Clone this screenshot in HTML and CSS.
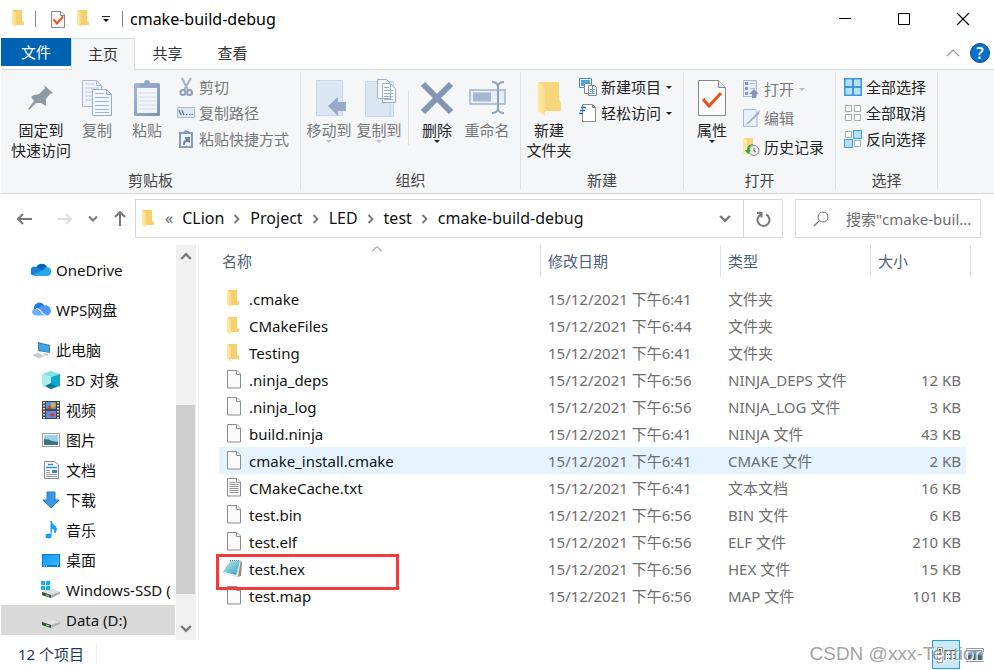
FILE: index.html
```html
<!DOCTYPE html>
<html lang="zh-CN">
<head>
<meta charset="utf-8">
<title>cmake-build-debug</title>
<link rel="stylesheet" href="styles.css">
</head>
<body>
<svg class="sprite" aria-hidden="true">
  <defs>
    <linearGradient id="gold" x1="0" x2="1"><stop offset="0" stop-color="#ffe9a6"/><stop offset="1" stop-color="#fbdc8a"/></linearGradient>
    <linearGradient id="steel" x1="0" x2="1" y2="1"><stop offset="0" stop-color="#a6b7d4"/><stop offset="1" stop-color="#7d91b8"/></linearGradient>
    <linearGradient id="teal" x1="0" x2="1" y2="1"><stop offset="0" stop-color="#c4ebf2"/><stop offset="1" stop-color="#2f9fbd"/></linearGradient>
    <linearGradient id="screen" x1="0" x2="1" y2="1"><stop offset="0" stop-color="#0a9aff"/><stop offset="1" stop-color="#3fb4ff"/></linearGradient>
  </defs>
  <symbol id="folder" viewBox="0 0 14 18"><path d="M2 0h9v11l2 1v3H3z" fill="#f6d06c"/><path d="M1 0l4 3v14L1 15z" fill="url(#gold)"/></symbol>
  <symbol id="page" viewBox="0 0 16 19"><path d="M1.500.500h9.500l3.500 3.500v14h-13z" fill="#fafafa" stroke="#8c8c8c"/><path d="M10.500.500v4h4" fill="#fff" stroke="#8c8c8c"/></symbol>
  <symbol id="textpage" viewBox="0 0 16 19"><path d="M1.500.500h9.500l3.500 3.500v14h-13z" fill="#fafafa" stroke="#8c8c8c"/><path d="M10.500.500v4h4" fill="#fff" stroke="#8c8c8c"/><path d="M3.500 4.500h6m-6 2h9m-9 2h9m-9 2h9m-9 2h9m-9 2h9" stroke="#999"/></symbol>
  <symbol id="drive" viewBox="0 0 20 18"><path d="M1 11l10-3 8 3v2l-9 4-9-3z" fill="#aeb0b3"/><path d="M1 11l10-3 8 3-9 3z" fill="#dfe1e4"/><path d="M1 11l9 3v3l-9-3z" fill="#444"/><path d="M5 14l3 1" stroke="#5edb5e" stroke-width="1.500"/></symbol>
  <symbol id="chev" viewBox="0 0 10 10"><path d="M1 2.500l4 4 4-4" fill="none" stroke="currentColor" stroke-width="2"/></symbol>
  <symbol id="crumb" viewBox="0 0 7 10"><path d="M1.500 1l4 4-4 4" fill="none" stroke="#777" stroke-width="1.800"/></symbol>
  <symbol id="tri" viewBox="0 0 6 3"><path d="M0 0h6L3 3z" fill="currentColor"/></symbol>
</svg>

<header class="titlebar">
  <svg class="tb-folder"><use href="#folder"/></svg>
  <span class="tb-line"></span>
  <button class="tb-btn tb-check" aria-label="属性"><svg width="16" height="19" viewBox="0 0 16 19"><path d="M1.500 1.500h9.500l3.500 3.500v12.500h-13z" fill="#f6f6f6" stroke="#888"/><path d="M10.500 1.500v4h4" fill="#fff" stroke="#888"/><path d="M3.500 9.500l3.500 4 6-7" fill="none" stroke="#e8541a" stroke-width="2"/></svg></button>
  <button class="tb-btn" aria-label="新建文件夹"><svg class="tb-folder"><use href="#folder"/></svg></button>
  <button class="tb-btn tb-more" aria-label="自定义"><svg width="8" height="8" viewBox="0 0 8 8"><path d="M0 1.500h8" stroke="#222"/><path d="M1 4h6L4 7z" fill="#000"/></svg></button>
  <span class="tb-line"></span>
  <h1 class="tb-title">cmake-build-debug</h1>
  <div class="win-controls">
    <button aria-label="最小化"><svg width="14" height="14"><path d="M1 6.500h12" stroke="#000"/></svg></button>
    <button aria-label="最大化"><svg width="14" height="14"><path d="M1.500 1.500h11v11h-11z" fill="none" stroke="#000"/></svg></button>
    <button aria-label="关闭"><svg width="14" height="14"><path d="M1 1l12 12M13 1L1 13" stroke="#000" stroke-width="1.200"/></svg></button>
  </div>
</header>

<nav class="tabs">
  <button class="tab file">文件</button>
  <button class="tab active">主页</button>
  <button class="tab">共享</button>
  <button class="tab">查看</button>
  <div class="tab-tools">
    <button aria-label="折叠功能区"><svg width="14" height="8"><path d="M1 7l6-6 6 6" fill="none" stroke="#999" stroke-width="1.200"/></svg></button>
    <button class="help" aria-label="帮助">?</button>
  </div>
</nav>

<section class="ribbon">
  <div class="group clip">
    <div class="tools">
      <button class="big pin"><span class="pic"><svg width="26" height="28" viewBox="0 0 26 28"><path d="M16 1l9 8-3 1-4 5 0 7-5-3-5 0-7 7-1-1 6-8-3-4 3-2 5-1 6-6z" fill="#8f9ba3"/></svg></span>固定到<br>快速访问</button>
      <button class="big dim"><span class="pic"><svg width="32" height="38" viewBox="0 0 32 38"><path d="M1.500 1.500h14l5 5v21h-19z" fill="#f0f4fa" stroke="#a9bad6"/><path d="M15.500 1.500v5h5" fill="none" stroke="#a9bad6"/><path d="M4 9h14M4 13h14M4 17h14M4 21h14M4 5h9" stroke="#b9c9e2"/><path d="M11.500 10.500h14l5 5v21h-19z" fill="#f4f7fc" stroke="#98abc9"/><path d="M25.500 10.500v5h5" fill="none" stroke="#98abc9"/><path d="M14 14.500h9m-9 4h14m-14 4h14m-14 4h14m-14 4h14m-14 3h14" stroke="#9fb2d0"/></svg></span>复制</button>
      <button class="big dim"><span class="pic"><svg width="28" height="38" viewBox="0 0 28 38"><rect x="1" y="4" width="26" height="33" rx="1.500" fill="url(#steel)"/><path d="M4 9h20v25H4z" fill="#f2f6fc"/><path d="M5 14h18M5 18h18M5 22h18M5 26h18M5 30h18" stroke="#cfdbec"/><path d="M7 8V4h4a3 3 0 0 1 6 0h4v4z" fill="#94a6c6"/></svg></span>粘贴</button>
      <div class="stack">
        <button class="small dim"><svg width="18" height="20" viewBox="0 0 18 20"><path d="M5 1l6 12M14 1L7 13" stroke="#a6b0be" stroke-width="2"/><circle cx="6" cy="15.500" r="2.500" fill="none" stroke="#8d9dbb" stroke-width="2"/><circle cx="12.500" cy="15.500" r="2.500" fill="none" stroke="#8d9dbb" stroke-width="2"/></svg>剪切</button>
        <button class="small dim"><svg width="18" height="12" viewBox="0 0 18 12"><path d="M.500.500h17v10H.500z" fill="#dde7f4" stroke="#a9bad6"/><path d="M2 3l2 5m1-5l2 5M9 7.500h1.500m1.500 0h1.500m1 0H16" stroke="#5d7399" stroke-width="1.200"/></svg>复制路径</button>
        <button class="small dim"><svg width="18" height="20" viewBox="0 0 18 20"><path d="M3 4h12v14H3z" fill="#f0f4fb" stroke="#8598bd" stroke-width="2"/><path d="M6 5V3l3-2 4 2v2z" fill="#8598bd"/><path d="M6 16c0-4 1-5 3-5L7.500 8H13v6l-2-1c-3 0-3 1-3 3z" fill="#6f86b3"/></svg>粘贴快捷方式</button>
      </div>
    </div>
    <div class="caption">剪贴板</div>
  </div>

  <div class="group org">
    <div class="tools">
      <button class="big dim"><span class="pic"><svg width="34" height="38" viewBox="0 0 34 38"><path d="M4.500 1.500h26v35h-26z" fill="#dbe6f5" stroke="#c5d4e9"/><path d="M16 27l10-9v5h8v9h-8v5z" fill="#97a8c8"/></svg></span>移动到<svg class="tri"><use href="#tri"/></svg></button>
      <button class="big dim"><span class="pic"><svg width="34" height="40" viewBox="0 0 34 40"><path d="M3.500 3.500h28v35h-28z" fill="#dbe6f5" stroke="#c5d4e9"/><path d="M28 26v12" stroke="#c5d4e9"/><path d="M15.500 1.500h9l4 4v15h-13zM20.500 5.500h8l5 5v14h-13z" fill="#f5f8fc" stroke="#9eb0ce"/><path d="M22 9.500h5m-5 3h9m-9 3h9m-9 3h9m-9 3h9" stroke="#9eb0ce"/></svg></span>复制到<svg class="tri"><use href="#tri"/></svg></button>
      <span class="divider"></span>
      <button class="big"><span class="pic"><svg width="34" height="34" viewBox="0 0 34 34"><path d="M3 3l28 28M31 3L3 31" stroke="#8494b5" stroke-width="6"/></svg></span>删除<svg class="tri"><use href="#tri"/></svg></button>
      <button class="big dim"><span class="pic"><svg width="38" height="36" viewBox="0 0 38 36"><path d="M2 10h35v14H2z" fill="#e6eef9" stroke="#a3b5d2" stroke-width="1.500"/><path d="M5 12.500h18v9H5z" fill="#a8b6d0"/><path d="M30 5v26M24 2q5 0 6 4 1-4 6-4M24 33q5 0 6-4 1 4 6 4" fill="none" stroke="#8fa1c0" stroke-width="2"/></svg></span>重命名</button>
    </div>
    <div class="caption">组织</div>
  </div>

  <div class="group new">
    <div class="tools">
      <button class="big"><span class="pic"><svg width="26" height="38" viewBox="0 0 26 38"><path d="M2 3h21v18l2 2v9H9z" fill="#f8d67a"/><path d="M2 3l7 5v29l-7-5z" fill="url(#gold)"/></svg></span>新建<br>文件夹</button>
      <div class="stack">
        <button class="small"><svg width="18" height="18" viewBox="0 0 18 18"><path d="M.500.500h12v9H.500z" fill="#fff" stroke="#3c8fc4"/><path d="M2 2h9v6H2z" fill="#49a8dc"/><path d="M5.500 5.500h6l2 2v8h-8zM9.500 7.500h6l2 2v8h-8z" fill="#fff" stroke="#888"/><path d="M11 11.500h5m-5 2h5m-5 2h5" stroke="#6da1ce"/></svg>新建项目<svg class="tri"><use href="#tri"/></svg></button>
        <button class="small"><svg width="18" height="18" viewBox="0 0 18 18"><path d="M3.500.500h10l3 3v14h-13z" fill="#fff" stroke="#888"/><path d="M13.500.500v3h3" fill="none" stroke="#888"/><path d="M2 3.500h5m-6 3h5m-6 3h4" stroke="#1673c4" stroke-width="1.500"/></svg>轻松访问<svg class="tri"><use href="#tri"/></svg></button>
      </div>
    </div>
    <div class="caption">新建</div>
  </div>

  <div class="group open">
    <div class="tools">
      <button class="big"><span class="pic"><svg width="28" height="38" viewBox="0 0 28 38"><path d="M.500 1.500h20l7 7v28H.500z" fill="#fafafa" stroke="#868686"/><path d="M20.500 1.500v7h7" fill="#e8e8e8" stroke="#868686"/><path d="M5 20l6 7 12-13" fill="none" stroke="#ea5413" stroke-width="3"/></svg></span>属性<svg class="tri"><use href="#tri"/></svg></button>
      <div class="stack roomy">
        <button class="small dim"><svg width="18" height="20" viewBox="0 0 18 20"><path d="M1.500 1.500h13v16h-13z" fill="#e6edf8" stroke="#a8b8d2"/><path d="M3 3h3v3H3zM3 8h3v3H3zM3 13h3v3H3z" fill="#8397bd"/><path d="M8 4.500h5M8 9.500h5" stroke="#a8b8d2"/><path d="M7 15l5-5 5 5h-3v4h-4v-4z" fill="#8295ba"/></svg>打开<svg class="tri"><use href="#tri"/></svg></button>
        <button class="small dim"><svg width="18" height="18" viewBox="0 0 18 18"><path d="M1.500.500h12l1.500 2v15H1.500z" fill="#eaf0f9" stroke="#a8b8d2"/><path d="M3 16L15 4l3-3-1 4L6 15z" fill="#9cadc9"/></svg>编辑</button>
        <button class="small"><svg width="18" height="18" viewBox="0 0 18 18"><path d="M2 0h9v16H2z" fill="#f8d67a"/><path d="M1 0l4 2v15l-4-2z" fill="#ffe9a6"/><circle cx="12" cy="12.500" r="5" fill="#ececec" stroke="#858585"/><path d="M12 10v3l2 1" fill="none" stroke="#555"/><path d="M11 7q-4 0-4 5h2l-3 4-3-4h2q0-6 6-6z" fill="#2caa35"/></svg>历史记录</button>
      </div>
    </div>
    <div class="caption">打开</div>
  </div>

  <div class="group select">
    <div class="tools">
      <div class="stack">
        <button class="small"><svg width="18" height="18" viewBox="0 0 18 18"><path d="M0 0h18v18H0z" fill="#3a96dd"/><path d="M1.500 1.500H8V8H1.500zM10 1.500h6.500V8H10zM1.500 10H8v6.500H1.500zM10 10h6.500v6.500H10z" fill="#b5e0fa"/></svg>全部选择</button>
        <button class="small"><svg width="18" height="18" viewBox="0 0 18 18"><path d="M1.500 1.500h6v6h-6zM10.500 1.500h6v6h-6zM1.500 10.500h6v6h-6zM10.500 10.500h6v6h-6z" fill="#fff" stroke="#a8a8a8"/></svg>全部取消</button>
        <button class="small"><svg width="18" height="18" viewBox="0 0 18 18"><path d="M1.500 1.500h6v6h-6zM10.500 10.500h6v6h-6z" fill="#fff" stroke="#a8a8a8"/><path d="M9.500.500h8v8h-8zM.500 9.500h8v8h-8z" fill="#b5e0fa" stroke="#3a96dd"/></svg>反向选择</button>
      </div>
    </div>
    <div class="caption">选择</div>
  </div>
</section>

<section class="navrow">
  <div class="history">
    <button aria-label="后退"><svg width="16" height="12"><path d="M15 6H1M6 1L1 6l5 5" fill="none" stroke="#777" stroke-width="2"/></svg></button>
    <button aria-label="前进"><svg width="16" height="12"><path d="M1 6h14M10 1l5 5-5 5" fill="none" stroke="#ddd" stroke-width="2"/></svg></button>
    <button aria-label="最近位置"><svg class="chev"><use href="#chev"/></svg></button>
    <button aria-label="上移"><svg width="12" height="16"><path d="M6 15V1M1 6l5-5 5 5" fill="none" stroke="#777" stroke-width="2"/></svg></button>
  </div>
  <div class="address">
    <svg class="tb-folder"><use href="#folder"/></svg>
    <span class="more">«</span>
    <a href="#">CLion</a><svg class="sep"><use href="#crumb"/></svg>
    <a href="#">Project</a><svg class="sep"><use href="#crumb"/></svg>
    <a href="#">LED</a><svg class="sep"><use href="#crumb"/></svg>
    <a href="#">test</a><svg class="sep"><use href="#crumb"/></svg>
    <a href="#">cmake-build-debug</a>
    <button class="drop" aria-label="以前的位置"><svg class="chev wide"><use href="#chev"/></svg></button>
    <button class="refresh" aria-label="刷新"><svg width="16" height="16" viewBox="0 0 16 16"><path d="M2 2h4.500v4.500M6 3.500a6 6 0 1 0 5 0" fill="none" stroke="#777" stroke-width="2"/></svg></button>
  </div>
  <label class="search"><svg width="16" height="16" viewBox="0 0 16 16"><circle cx="10" cy="6" r="5" fill="none" stroke="#777"/><path d="M6.500 9.500L1 15" stroke="#777" stroke-width="1.200"/></svg><input type="text" aria-label="搜索" placeholder="搜索&quot;cmake-buil..."></label>
</section>

<main class="body">
  <aside class="sidebar">
    <ul>
      <li class="top"><svg viewBox="0 0 20 18"><path d="M5 7a6 6 0 0 1 11-1l-4 6-8-4z" fill="#0364b8"/><path d="M1 14a4.500 4.500 0 0 1 4-8l9 4-6 5z" fill="#1681d8"/><path d="M16 6a4.600 4.600 0 0 1 1 9H5q-2 0-3.500-1L12 9q2-3 4-3z" fill="#28a8ea"/></svg>OneDrive</li>
      <li class="top"><svg viewBox="0 0 20 18"><path d="M3 8a5.500 5.500 0 0 1 9.500-4.500L18 14H5a4 4 0 0 1-2-6z" fill="#1e78f0"/><path d="M12 5a5 5 0 0 1 5 9.500h-4L8 7q1-2 4-2z" fill="#4f98ff"/><path d="M1.500 9.500Q4 7 7 9l6 5.500H5q-5-1-3.500-5z" fill="#6db0ff"/><path d="M5 7.500q3 0 5 3t5 4" fill="none" stroke="#fff" stroke-width="1.200"/></svg>WPS网盘</li>
      <li class="top"><svg viewBox="0 0 20 18"><path d="M7 1l12 3v8L7 10z" fill="#61778c"/><path d="M8 2.500l10 2.500v6L8 9z" fill="#35a8f2"/><path d="M12 12l5 1v2l-4-1zM1 14l6-2 7 3-6 2z" fill="#c3c9cf"/></svg>此电脑</li>
      <li><svg viewBox="0 0 20 18"><path d="M1 3l9-3 9 3-9 3z" fill="#7fe1ea"/><path d="M1 3l9 3v12l-9-3z" fill="#a9ebef"/><path d="M19 3l-9 3v12l9-3z" fill="#12a9c8"/><path d="M4 15l6-3 6 3-6 3z" fill="#087b92"/></svg>3D 对象</li>
      <li><svg viewBox="0 0 20 18"><path d="M1 0h18v18H1z" fill="#444"/><path d="M5 1h10v7H5zM5 10h10v7H5z" fill="#5b8de8"/><circle cx="12" cy="4" r="2.500" fill="#d4b62d"/><path d="M5 8l4-4 2 4zM8 13l4-1 2 2-3 2z" fill="#d4412b"/><path d="M3 1v17M17 1v17" stroke="#ddd" stroke-width="2" stroke-dasharray="1.500 1.500"/></svg>视频</li>
      <li><svg viewBox="0 0 20 18"><path d="M1.500 2.500h17v13h-17z" fill="#fff" stroke="#999"/><path d="M3 4h14v10H3z" fill="#9bcef3"/><path d="M3 8q5 0 8 2l6 1v3H3z" fill="#3c7566"/><path d="M3 12h14v2H3z" fill="#3f6ea4"/></svg>图片</li>
      <li><svg viewBox="0 0 20 18"><path d="M3.500.500h10l4 3v14h-14z" fill="#fff" stroke="#888"/><path d="M7 3.500h5m-7 3h11" stroke="#2a8ad4" stroke-width="1.500"/><path d="M5 9.500h4m-4 2h4m-4 2h11m-11 2h11" stroke="#999"/><path d="M11 9h5v3h-5z" fill="#3d86bd"/></svg>文档</li>
      <li><svg viewBox="0 0 20 18"><path d="M6 1h8v8h4l-8 8-8-8h4z" fill="#3b97e3" stroke="#2a7dc8"/></svg>下载</li>
      <li><svg viewBox="0 0 20 18"><ellipse cx="7.500" cy="15" rx="3" ry="2.500" fill="#15a0f5"/><path d="M10 15V0q1 4 4 5 3 3 0 7 0-4-3-5" fill="#15a0f5" stroke="#15a0f5"/></svg>音乐</li>
      <li><svg viewBox="0 0 20 18"><path d="M1 3h18v13H1z" fill="#0a7bd0"/><path d="M2 4h16v10H2z" fill="url(#screen)"/><path d="M3 15h1m1 0h1m10 0h1" stroke="#fff"/></svg>桌面</li>
      <li><svg viewBox="0 0 20 18"><use href="#drive" width="20" height="18"/><path d="M0 0h4v4H0zM5 0h4v4H5zM0 5h4v4H0zM5 5h4v4H5z" fill="#10b1ee"/></svg>Windows-SSD (</li>
      <li class="current"><svg viewBox="0 0 20 18"><use href="#drive" width="20" height="18"/></svg>Data (D:)</li>
    </ul>
    <div class="scrollbar" aria-hidden="true">
      <svg class="chev wide up"><use href="#chev"/></svg>
      <span class="thumb"></span>
      <svg class="chev wide"><use href="#chev"/></svg>
    </div>
  </aside>
  <section class="files">
    <table>
      <colgroup><col class="c-name"><col class="c-date"><col class="c-type"><col class="c-size"></colgroup>
      <thead><tr><th>名称<svg class="sort" width="10" height="6"><path d="M0 5.500l5-5 5 5" fill="none" stroke="#777"/></svg></th><th>修改日期</th><th>类型</th><th>大小</th></tr></thead>
      <tbody>
        <tr><td><span class="name"><svg class="f"><use href="#folder"/></svg>.cmake</span></td><td>15/12/2021 下午6:41</td><td>文件夹</td><td></td></tr>
        <tr><td><span class="name"><svg class="f"><use href="#folder"/></svg>CMakeFiles</span></td><td>15/12/2021 下午6:44</td><td>文件夹</td><td></td></tr>
        <tr><td><span class="name"><svg class="f"><use href="#folder"/></svg>Testing</span></td><td>15/12/2021 下午6:41</td><td>文件夹</td><td></td></tr>
        <tr><td><span class="name"><svg><use href="#page"/></svg>.ninja_deps</span></td><td>15/12/2021 下午6:56</td><td>NINJA_DEPS 文件</td><td>12 KB</td></tr>
        <tr><td><span class="name"><svg><use href="#page"/></svg>.ninja_log</span></td><td>15/12/2021 下午6:56</td><td>NINJA_LOG 文件</td><td>3 KB</td></tr>
        <tr><td><span class="name"><svg><use href="#page"/></svg>build.ninja</span></td><td>15/12/2021 下午6:41</td><td>NINJA 文件</td><td>43 KB</td></tr>
        <tr class="hover"><td><span class="name"><svg><use href="#page"/></svg>cmake_install.cmake</span></td><td>15/12/2021 下午6:41</td><td>CMAKE 文件</td><td>2 KB</td></tr>
        <tr><td><span class="name"><svg><use href="#textpage"/></svg>CMakeCache.txt</span></td><td>15/12/2021 下午6:41</td><td>文本文档</td><td>16 KB</td></tr>
        <tr><td><span class="name"><svg><use href="#page"/></svg>test.bin</span></td><td>15/12/2021 下午6:56</td><td>BIN 文件</td><td>6 KB</td></tr>
        <tr><td><span class="name"><svg><use href="#page"/></svg>test.elf</span></td><td>15/12/2021 下午6:56</td><td>ELF 文件</td><td>210 KB</td></tr>
        <tr class="marked"><td><span class="name"><svg class="note" viewBox="0 0 20 19"><path d="M17 1l2 2-1 14-4 1z" fill="#9a8867"/><path d="M7 1h11l-3 17-4-2z" fill="#dfe5e5"/><path d="M7 2h10l-4 14-13-3z" fill="url(#teal)"/><path d="M0 13l13 3v2L0 14z" fill="#d8eef3"/><path d="M7 1.500h10" stroke="#777" stroke-dasharray="1 1"/></svg>test.hex</span></td><td>15/12/2021 下午6:56</td><td>HEX 文件</td><td>15 KB</td></tr>
        <tr><td><span class="name"><svg><use href="#page"/></svg>test.map</span></td><td>15/12/2021 下午6:56</td><td>MAP 文件</td><td>101 KB</td></tr>
      </tbody>
    </table>
  </section>
</main>

<footer class="status">
  <span class="count">12 个项目</span>
  <div class="views">
    <button class="on" aria-label="详细信息"><svg width="18" height="17" viewBox="0 0 18 17"><path d="M.500 1.500h5v15h-5z" fill="#fff" stroke="#999"/><path d="M2 4h2M2 8h2" stroke="#333" stroke-width="1.500"/><path d="M2 13h2" stroke="#c22" stroke-width="2"/><path d="M7 4.500h4m1 0h6M7 8.500h4m1 0h6M7 12.500h4m1 0h6" stroke="#555"/></svg></button>
    <button aria-label="大图标"><svg width="18" height="14" viewBox="0 0 18 14"><path d="M.500.500h17v13H.500z" fill="#fff" stroke="#999"/><path d="M2 2h14v10H2z" fill="#6aa9e8"/><path d="M2 8q6-4 14 0v4H2z" fill="#3a6b6e"/></svg></button>
  </div>
  <span class="watermark">CSDN @xxx-Tention</span>
</footer>
</body>
</html>
```
FILE: styles.css
```css
*, ::before, ::after { box-sizing: border-box; }
body {
  margin: 0;
  min-height: 100vh;
  display: flex;
  flex-direction: column;
  padding-left: 1px;
  overflow: hidden;
  background: #fff;
  color: #111;
  font: 15px/20px "Noto Sans", "Noto Sans CJK SC", sans-serif;
}
button, input { font: inherit; color: inherit; border: 0; background: none; padding: 0; margin: 0; }
a { color: inherit; text-decoration: none; }
svg { flex: none; display: block; }
.sprite { position: absolute; width: 0; height: 0; }

.titlebar { display: flex; align-items: center; height: 38px; padding-left: 10px; }
.tb-folder { width: 14px; height: 18px; }
.tb-line { width: 1px; height: 16px; margin: 0 10px; background: #888; }
.tb-btn { margin-right: 10px; }
.tb-check { margin-left: 4px; }
.tb-more { margin: 0 2px; }
.tb-title { margin: 0 0 0 -3px; flex: 1; font-size: 16px; font-weight: 400; color: #000; }
.win-controls { display: flex; gap: 45px; padding-right: 24px; }

.tabs { display: flex; height: 32px; border-bottom: 1px solid #d9dadc; }
.tab { width: 65px; height: 32px; padding-bottom: 2px; color: #333; }
.tab.file { width: 70px; height: 28px; padding: 0; background: #0063b1; color: #fff; }
.tab.active { width: 64px; border: 1px solid #d9dadc; border-bottom: 0; background: #f5f6f8; }
.tab-tools { display: flex; align-items: center; gap: 10px; margin-left: auto; padding: 0 4px 2px 0; }
.help { width: 20px; height: 20px; border: 1px solid #0a4d88; border-radius: 50%; background: #0b6fce; color: #fff; font-size: 16px; line-height: 18px; font-weight: 600; }

.ribbon { display: flex; height: 124px; background: #f5f6f8; border-bottom: 1px solid #d9dadc; }
.group { display: flex; flex-direction: column; margin: 2px 0 3px; border-right: 1px solid #e0e1e4; }
.tools { display: flex; flex: 1; align-items: flex-start; padding: 4px 8px 0 3px; }
.clip .tools { padding: 4px 11px 0 9px; }
.new .tools { padding-right: 11px; }
.open .tools, .select .tools { padding-right: 11px; }
.caption { text-align: center; color: #444; }
.big { display: block; width: 50px; color: #222; text-align: center; white-space: nowrap; }
.big.pin { width: 62px; }
.pic { display: flex; align-items: center; justify-content: center; height: 44px; }
.tri { width: 6px; height: 3px; }
.big .tri { margin: 0 auto; }
.small .tri { margin-left: 1px; }
.dim { color: #777; }
.dim .tri { color: #bbb; }
.stack { display: flex; flex-direction: column; gap: 6px; padding: 1px 0 0 5px; }
.roomy { gap: 9px; padding-top: 3px; }
.small { display: flex; align-items: center; gap: 4px; height: 20px; color: #222; white-space: nowrap; }
.small.dim { color: #777; }
.divider { width: 1px; height: 54px; margin: 15px 3px 0 4px; background: #dcdde0; }

.navrow { display: flex; align-items: center; gap: 12px; height: 49px; margin-bottom: 2px; padding-right: 13px; }
.history { display: flex; align-items: center; gap: 16px; width: 122px; padding-left: 16px; }
.history button:first-child { margin-right: 7px; }
.chev { width: 10px; height: 10px; color: #777; }
.chev.wide { width: 12px; height: 12px; }
.address { display: flex; flex: 1; align-items: center; height: 39px; padding-left: 5px; border: 1px solid #d9d9d9; color: #111; font-size: 16px; }
.address .more, .address a { padding-bottom: 2px; }
.address .more { margin: 0 9px 0 10px; color: #666; }
.sep { width: 7px; height: 10px; margin: 0 10px 0 9px; }
.drop { margin-left: auto; padding: 0 12px; }
.refresh { display: flex; align-items: center; justify-content: center; width: 39px; height: 37px; border-left: 1px solid #d9d9d9; }
.search { display: flex; align-items: center; gap: 17px; width: 186px; height: 39px; padding: 0 4px 0 17px; border: 1px solid #d9d9d9; }
.search input { min-width: 0; flex: 1; outline: 0; }
.search input::placeholder { color: #6d6d6d; opacity: 1; }

.body { display: flex; flex: 1; }
.sidebar { display: flex; width: 198px; padding-right: 2px; border-right: 1px solid #f0f0f0; }
.sidebar ul { flex: 1; min-width: 0; margin: 0; padding: 10px 1px 0 0; list-style: none; overflow: hidden; }
.sidebar li { display: flex; align-items: center; gap: 5px; height: 30px; padding-left: 40px; white-space: nowrap; color: #111; }
.sidebar li.top { padding-left: 30px; margin-bottom: 10px; }
.sidebar li.top + li:not(.top) { margin-top: -10px; }
.sidebar li svg { width: 20px; height: 18px; }
.sidebar li.current { background: #d9d9d9; }
.scrollbar { display: flex; flex-direction: column; align-items: center; width: 20px; padding: 5px 0; background: #f0f0f0; color: #555; }
.up { transform: rotate(180deg); }
.thumb { width: 100%; height: 189px; margin: auto 0 29px; border-right: 1px solid #f0f0f0; background: #cdcdcd; }

.files { flex: 1; padding-left: 20px; }
table { width: 752px; table-layout: fixed; border-collapse: separate; border-spacing: 0; }
.c-name { width: 322px; }
.c-date { width: 180px; }
.c-type { width: 150px; }
.c-size { width: 100px; }
th { position: relative; height: 32px; padding: 0 7px; text-align: left; font-weight: 400; color: #4c607a; border-right: 1px solid #e3e3e3; }
th:first-child { padding-left: 3px; }
.sort { position: absolute; left: 153px; top: 1px; }
tbody::before { content: ""; display: block; height: 8px; }
td { height: 27px; padding: 0 7px; color: #6d6d6d; white-space: nowrap; }
td:first-child { position: relative; color: #111; }
td:last-child { text-align: right; padding-right: 10px; }
.name { display: flex; align-items: center; gap: 7px; }
.name svg { width: 16px; height: 19px; }
.name svg.f { width: 14px; height: 18px; margin-right: 2px; }
.name svg.note { width: 20px; margin-left: -3px; margin-right: -1px; }
.hover { background: linear-gradient(#e5f3ff, #e5f3ff) no-repeat 0 0 / calc(100% - 5px) 100%; }
.marked td:first-child::after { content: ""; position: absolute; z-index: 1; left: -3px; top: -1px; width: 183px; height: 36px; border: 3px solid #f63a38; }

.status { position: relative; display: flex; align-items: flex-start; height: 30px; padding: 0 10px 0 17px; color: #1e395b; }
.count { margin-top: 4px; padding-right: 12px; border-right: 1px solid #eee; }
.views { display: flex; align-items: center; gap: 6px; margin-left: auto; }
.views .on { display: flex; align-items: center; justify-content: center; width: 28px; height: 29px; border: 1px solid #26a0da; background: #cbe8f6; }
.watermark { position: absolute; right: 10px; top: 2px; font: 19px/24px "Liberation Sans", sans-serif; color: #8a8a8acc; text-shadow: 1px 1px 0 #fff; }
```
